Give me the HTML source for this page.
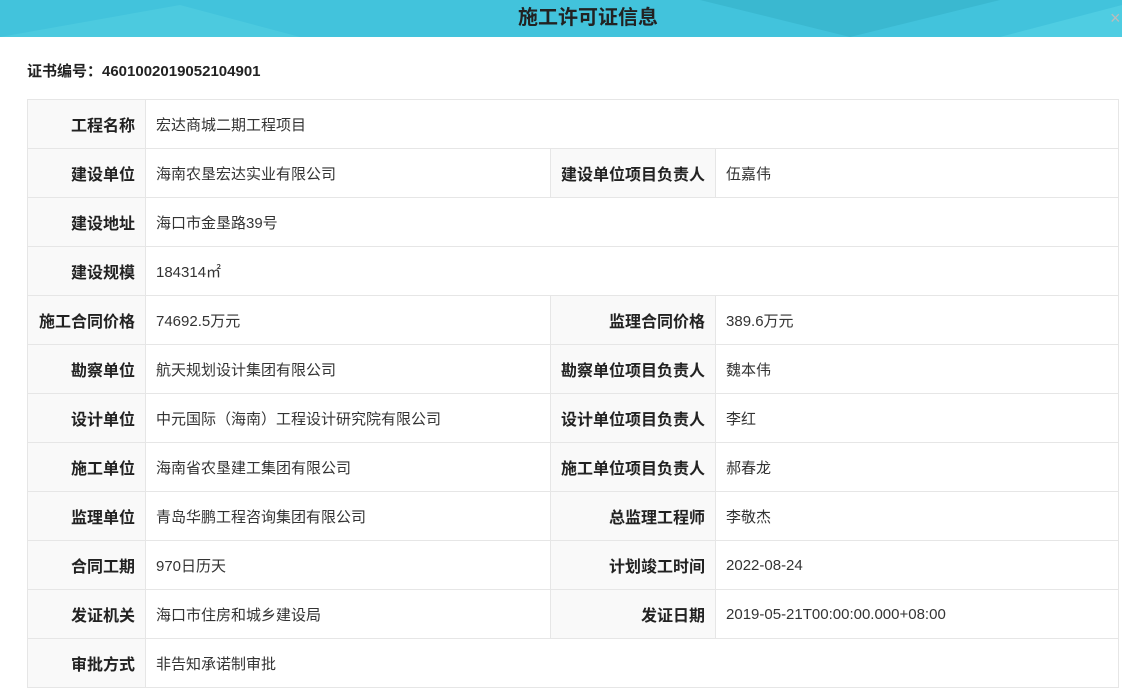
<!DOCTYPE html>
<html><head><meta charset="utf-8"><style>
body{margin:0;width:1122px;height:690px;overflow:hidden;background:#fff;font-family:"Liberation Sans","Noto Sans CJK SC",sans-serif;color:#333}
.hd{position:absolute;left:0;top:0;width:1122px;height:37px;background:#42c3dc;overflow:hidden}
.hd svg{position:absolute;left:0;top:0}
.hd .t{position:absolute;left:0;width:1176px;top:0;line-height:37px;text-align:center;font-size:20px;font-weight:bold;color:#222}
.x{position:absolute;left:1110px;top:8px;color:#bbb;font-size:18px}
.no{position:absolute;left:27px;top:60px;font-size:15px;font-weight:bold;color:#222}
table{position:absolute;left:27px;top:99px;border-collapse:collapse;font-size:15px}
td{border:1px solid #e6e6e6;height:48px;padding:0 10px;white-space:nowrap}
td.l{background:#f9f9f9;font-weight:bold;color:#222;text-align:right;font-size:16px}
</style></head><body>
<div class="hd"><svg width="1122" height="37"><polygon points="0,37 180,5 300,37" fill="#4ccadf"/><polygon points="700,0 850,37 1000,0" fill="#3ab8d0"/><polygon points="1000,37 1122,5 1122,37" fill="#4fcde2"/></svg><div class="t">施工许可证信息</div><div class="x">×</div></div>
<div class="no">证书编号：4601002019052104901</div>
<table>
<colgroup><col style="width:118px"><col style="width:405px"><col style="width:165px"><col style="width:403px"></colgroup>
<tr><td class="l">工程名称</td><td colspan="3">宏达商城二期工程项目</td></tr>
<tr><td class="l">建设单位</td><td>海南农垦宏达实业有限公司</td><td class="l">建设单位项目负责人</td><td>伍嘉伟</td></tr>
<tr><td class="l">建设地址</td><td colspan="3">海口市金垦路39号</td></tr>
<tr><td class="l">建设规模</td><td colspan="3">184314㎡</td></tr>
<tr><td class="l">施工合同价格</td><td>74692.5万元</td><td class="l">监理合同价格</td><td>389.6万元</td></tr>
<tr><td class="l">勘察单位</td><td>航天规划设计集团有限公司</td><td class="l">勘察单位项目负责人</td><td>魏本伟</td></tr>
<tr><td class="l">设计单位</td><td>中元国际（海南）工程设计研究院有限公司</td><td class="l">设计单位项目负责人</td><td>李红</td></tr>
<tr><td class="l">施工单位</td><td>海南省农垦建工集团有限公司</td><td class="l">施工单位项目负责人</td><td>郝春龙</td></tr>
<tr><td class="l">监理单位</td><td>青岛华鹏工程咨询集团有限公司</td><td class="l">总监理工程师</td><td>李敬杰</td></tr>
<tr><td class="l">合同工期</td><td>970日历天</td><td class="l">计划竣工时间</td><td>2022-08-24</td></tr>
<tr><td class="l">发证机关</td><td>海口市住房和城乡建设局</td><td class="l">发证日期</td><td>2019-05-21T00:00:00.000+08:00</td></tr>
<tr><td class="l">审批方式</td><td colspan="3">非告知承诺制审批</td></tr>
</table>
</body></html>
